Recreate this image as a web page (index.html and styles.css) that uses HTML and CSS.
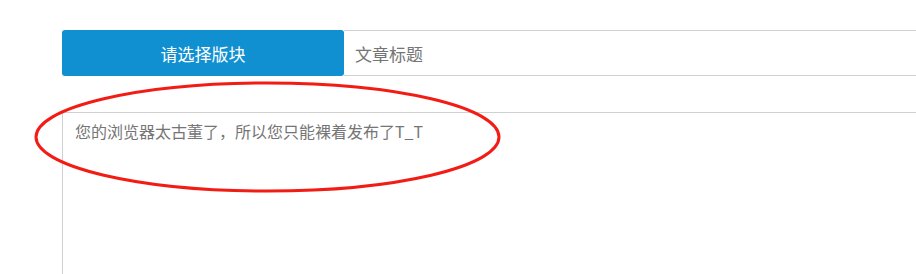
FILE: index.html
```html
<!DOCTYPE html>
<html lang="zh-CN">
<head>
<meta charset="utf-8">
<title>发布</title>
<link rel="stylesheet" href="styles.css">
</head>
<body>
<div class="page">
  <div class="title-row">
    <button class="board-btn" type="button">请选择版块</button>
    <div class="title-input">文章标题</div>
  </div>
  <div class="editor">
    <p class="fallback">您的浏览器太古董了，所以您只能裸着发布了T_T</p>
  </div>
  <svg class="annot" width="916" height="274" viewBox="0 0 916 274" aria-hidden="true">
    <ellipse cx="267.5" cy="137" rx="231.5" ry="54" fill="none" stroke="#f21c14" stroke-width="3"/>
  </svg>
</div>
</body>
</html>
```
FILE: styles.css
```css
html, body {
  margin: 0;
  padding: 0;
  background: #fff;
  height: 100%;
  overflow: hidden;
}
.page {
  position: relative;
  box-sizing: border-box;
  height: 274px;
  padding: 30px 0 0 62px;
  display: flex;
  flex-direction: column;
  font-family: "Noto Sans CJK SC", "Liberation Sans", sans-serif;
  font-size: 17px;
}
.title-row {
  display: flex;
  height: 46px;
}
.board-btn {
  width: 282px;
  height: 46px;
  margin: 0;
  border: 0;
  border-radius: 3px;
  background: #1190d1;
  color: #fff;
  font-family: inherit;
  font-size: 17px;
  padding: 0;
}
.title-input {
  flex: 1;
  box-sizing: border-box;
  height: 46px;
  border-top: 1px solid #d0d0d0;
  border-bottom: 1px solid #d0d0d0;
  padding: 0 11px;
  display: flex;
  align-items: center;
  color: #757575;
}
.editor {
  flex: 1;
  margin-top: 36px;
  border-top: 1px solid #d0d0d0;
  border-left: 1px solid #d0d0d0;
  padding: 6px 12px;
}
.fallback {
  margin: 0;
  font-size: 16px;
  line-height: 24px;
  color: #757575;
}
.annot {
  position: absolute;
  left: 0;
  top: 0;
  pointer-events: none;
}
```
